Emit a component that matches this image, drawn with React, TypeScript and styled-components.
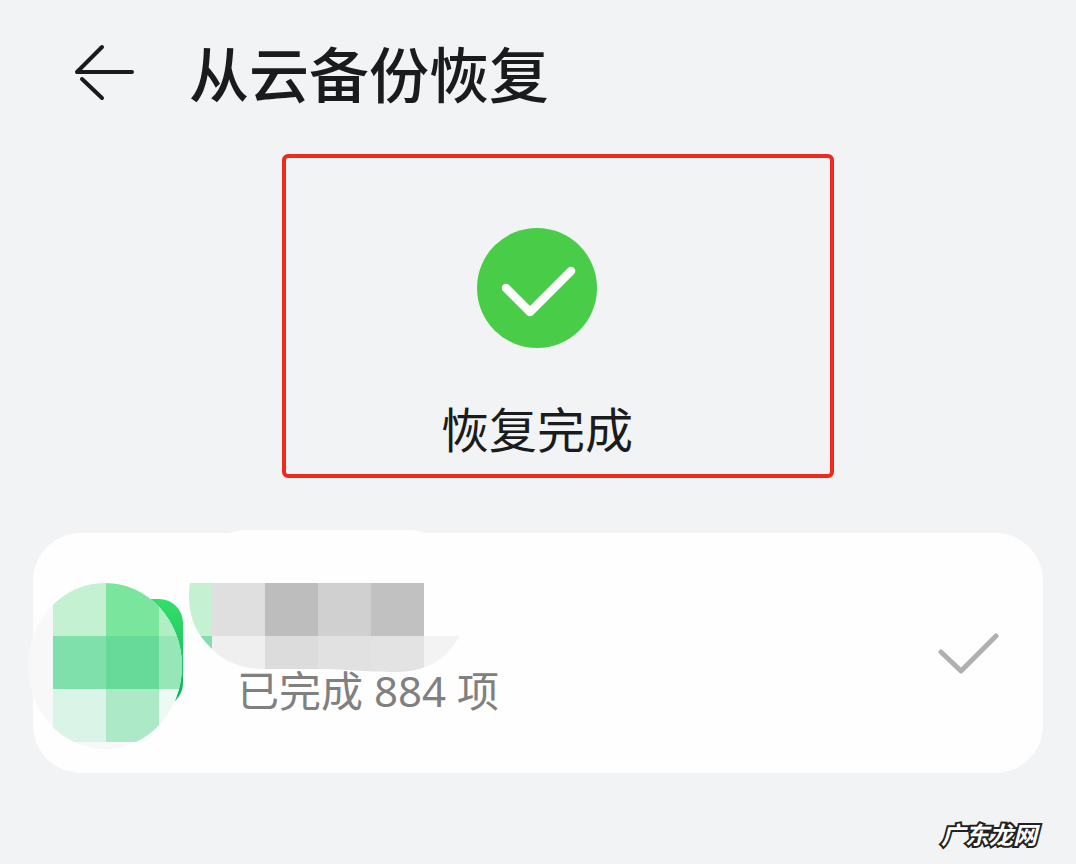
import React from "react";
import styled, { createGlobalStyle } from "styled-components";

const GlobalStyle = createGlobalStyle`
  *, *::before, *::after { box-sizing: border-box; }
  body {
    margin: 0;
    background: #f2f3f4;
    color: #1a1b1d;
    font-family: "Noto Sans CJK SC", sans-serif;
  }
`;

const Page = styled.div`
  min-height: 100vh;
  display: flex;
  flex-direction: column;
`;

const Header = styled.header`
  display: flex;
  align-items: center;
  gap: 53px;
  height: 143px;
  padding: 0 72px;
`;

const BackButton = styled.button`
  display: flex;
  padding: 0;
  border: 0;
  background: none;
  color: inherit;
  cursor: pointer;
`;

const Title = styled.h1`
  margin: 0;
  font-size: 60px;
  line-height: 80px;
  font-weight: 500;
`;

const Status = styled.section`
  position: relative;
  display: flex;
  flex-direction: column;
  align-items: center;
  gap: 45px;
  margin-top: 11px;
  padding: 74px 2px 17px 0;
`;

const Highlight = styled.div`
  position: absolute;
  top: 0;
  bottom: 0;
  left: calc(50% - 256px);
  width: 552px;
  border: 4px solid #ee2a20;
  border-radius: 6px;
`;

const StatusText = styled.p`
  margin: 0;
  font-size: 48px;
  line-height: 68px;
`;

const Card = styled.article`
  position: relative;
  display: flex;
  align-items: center;
  height: 240px;
  margin: 55px 33px 0;
  padding: 0 44px 0 42px;
  border-radius: 48px;
  background: #fefefe;
`;

const AppIcon = styled.div`
  width: 108px;
  height: 108px;
  border-radius: 24px;
  background: linear-gradient(#33e06a, #10ac5c);
`;

const Count = styled.p`
  flex: 1;
  margin: 76px 0 0 54px;
  color: #808080;
  font-family: "Noto Sans", "Noto Sans CJK SC", sans-serif;
  font-size: 42px;
  line-height: 56px;
`;

const Mosaic = styled.svg`
  position: absolute;
  top: -3px;
  left: -5px;
`;

const Footer = styled.footer`
  display: flex;
  justify-content: flex-end;
  margin-top: auto;
  padding: 0 39px 12px;
`;

const Watermark = styled.span`
  color: #fff;
  font-size: 24px;
  line-height: 36px;
  font-weight: 700;
  font-style: italic;
  -webkit-text-stroke: 4px #222;
  paint-order: stroke fill;
`;

type Cell = [x: number, y: number, width: number, height: number, fill: string];

const iconCells: Cell[] = [
  [25, 53, 53, 53, "#c5f1d3"],
  [78, 53, 53, 53, "#7ae59c"],
  [131, 53, 30, 53, "#b0eec4"],
  [25, 106, 53, 53, "#80e0ab"],
  [78, 106, 53, 53, "#67da99"],
  [131, 106, 30, 53, "#96e6b8"],
  [25, 159, 53, 53, "#daf4e7"],
  [78, 159, 53, 53, "#abe9c7"],
  [131, 159, 30, 53, "#edfaf3"],
];

const nameCells: Cell[] = [
  [156, 53, 28, 53, "#c5f1d3"],
  [184, 53, 53, 53, "#e0dfdf"],
  [237, 53, 53, 53, "#bdbdbd"],
  [290, 53, 53, 53, "#d0d0d0"],
  [343, 53, 53, 53, "#c1c1c1"],
  [156, 106, 28, 53, "#86dcad"],
  [184, 106, 53, 53, "#efefef"],
  [237, 106, 53, 53, "#dcdcdc"],
  [290, 106, 53, 53, "#e1e1e1"],
  [343, 106, 53, 53, "#e3e3e3"],
  [396, 106, 60, 53, "#f3f3f3"],
];

const Cells = ({ items }: { items: Cell[] }) => (
  <>
    {items.map(([x, y, width, height, fill]) => (
      <rect key={`${x}-${y}`} x={x} y={y} width={width} height={height} fill={fill} shapeRendering="crispEdges" />
    ))}
  </>
);

export default function App() {
  return (
    <Page>
      <GlobalStyle />
      <Header>
        <BackButton type="button" aria-label="返回">
          <svg width="64" height="60" viewBox="0 0 64 60" fill="none" stroke="currentColor" strokeWidth="4" strokeLinecap="round" strokeLinejoin="round">
            <path d="M30 5L5 30H60M10 37L30 56" />
          </svg>
        </BackButton>
        <Title>从云备份恢复</Title>
      </Header>

      <Status>
        <svg width="120" height="120" viewBox="0 0 120 120" aria-hidden="true">
          <circle cx="60" cy="60" r="60" fill="#49cd49" />
          <path d="M29 60L53 84L94 43" fill="none" stroke="#fff" strokeWidth="8.500" strokeLinecap="round" strokeLinejoin="round" />
        </svg>
        <StatusText>恢复完成</StatusText>
        <Highlight />
      </Status>

      <Card>
        <AppIcon />
        <Count>已完成 884 项</Count>
        <svg width="62" height="44" viewBox="0 0 62 44" fill="none" stroke="#b0b0b0" strokeWidth="5" strokeLinecap="round" strokeLinejoin="round" aria-hidden="true">
          <path d="M4 21L24 40L59 5" />
        </svg>
        <Mosaic width="450" height="224" viewBox="0 0 450 224" aria-hidden="true">
          <defs>
            <clipPath id="iconArea">
              <ellipse cx="77" cy="136" rx="77" ry="83" />
            </clipPath>
            <clipPath id="nameArea">
              <path d="M161 66C161 30 180 0 222 0H378C415 0 440 30 440 66C440 85 436 98 431 107C420 128 398 142 370 142C335 142 315 139 295 139H235C215 139 196 132 184 119C168 104 161 88 161 66Z" />
            </clipPath>
          </defs>
          <g clipPath="url(#iconArea)">
            <rect y="53" width="160" height="171" fill="#f8f8f8" />
            <Cells items={iconCells} />
          </g>
          <g clipPath="url(#nameArea)">
            <rect x="156" width="294" height="144" fill="#fefefe" />
            <Cells items={nameCells} />
          </g>
        </Mosaic>
      </Card>

      <Footer>
        <Watermark>广东龙网</Watermark>
      </Footer>
    </Page>
  );
}
